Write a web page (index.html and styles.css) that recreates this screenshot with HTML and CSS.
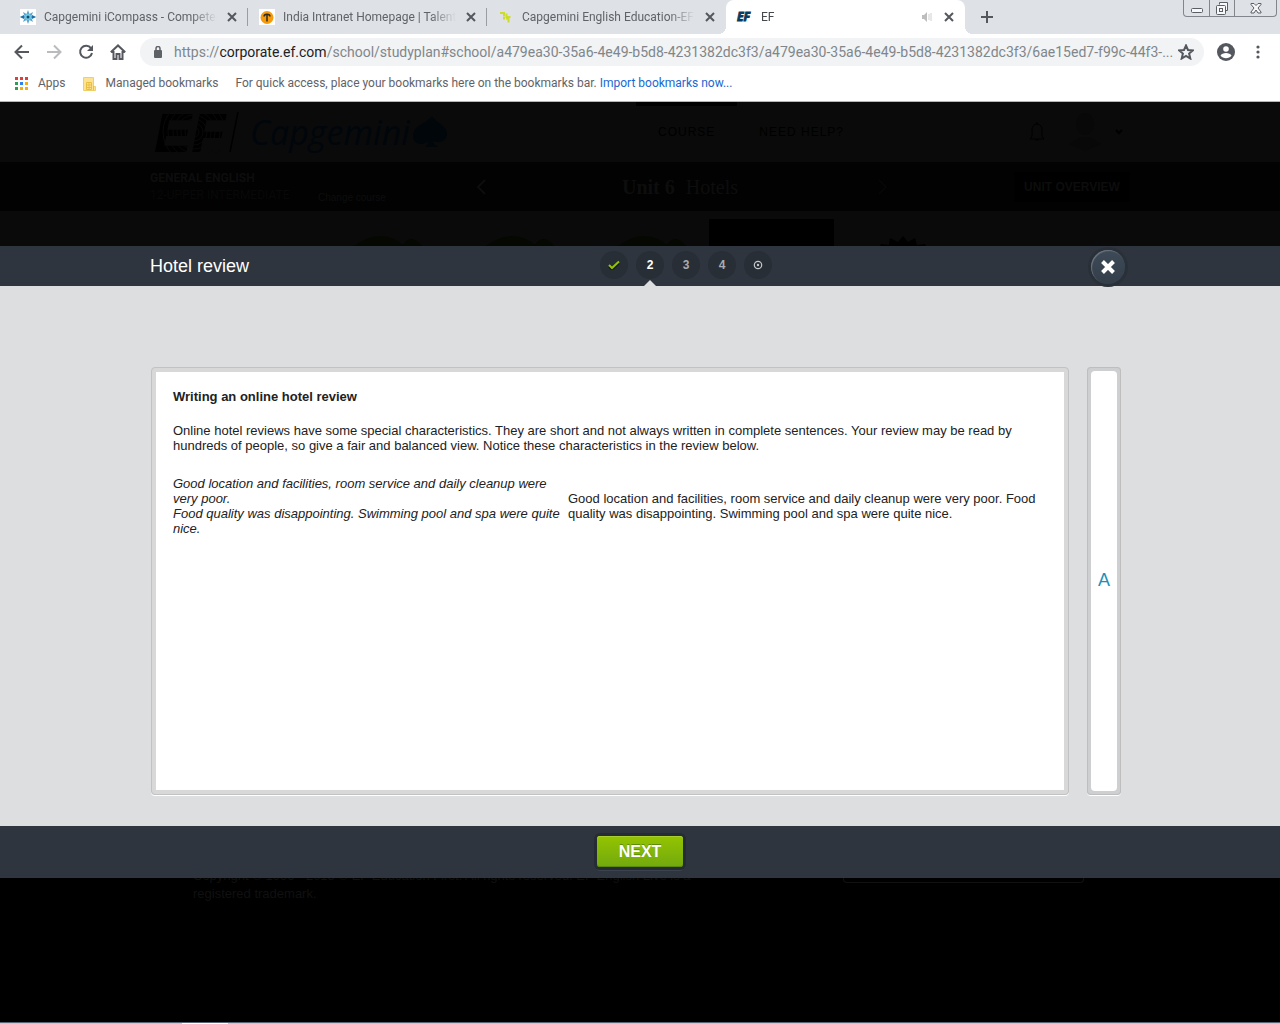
FILE: index.html
```html
<!DOCTYPE html>
<html lang="en">
<head>
<meta charset="utf-8">
<title>EF</title>
<link rel="stylesheet" href="styles.css">
</head>
<body>
<header class="browser">
  <div class="tab-strip">
    <div class="tab">
      <svg class="favicon" viewBox="0 0 16 16"><rect width="16" height="16" fill="#fff"/><path d="M8 1l1.500 4 3.500-2-1.500 4 4.500 1-4.500 1 1.500 4-3.500-2L8 15l-1.500-4L3 13l1.500-4L0 8l4.500-1L3 3l3.500 2z" fill="#5aa5cf"/><path d="M0 8l4-2v4zM12 6l4 2-4 2z" fill="#1c6ea4"/><circle cx="8" cy="8" r="3" fill="#6fcbe3"/><circle cx="8" cy="8" r="1.500" fill="#164a73"/></svg>
      <span class="tab-title">Capgemini iCompass - Competen</span>
      <button class="tab-close" aria-label="Close tab"><svg viewBox="0 0 10 10"><path d="M1 1l8 8M9 1l-8 8"/></svg></button>
    </div>
    <div class="tab divided">
      <svg class="favicon" viewBox="0 0 16 16"><rect width="16" height="16" fill="#fff"/><circle cx="8" cy="8.500" r="6.500" fill="#f79a0a"/><path d="M5 7.500c0-3 6-3 6 0M8 5.500v7" fill="none" stroke="#2b2b2b" stroke-width="1.500"/></svg>
      <span class="tab-title">India Intranet Homepage | Talent</span>
      <button class="tab-close" aria-label="Close tab"><svg viewBox="0 0 10 10"><path d="M1 1l8 8M9 1l-8 8"/></svg></button>
    </div>
    <div class="tab divided">
      <svg class="favicon" viewBox="0 0 16 16"><path d="M2 4h4v3.500M8.500 4.500v3.500h4M6 8v2.500M8 9.500h2.500v4" fill="none" stroke="#cddb2a" stroke-width="2"/></svg>
      <span class="tab-title">Capgemini English Education-EF S</span>
      <button class="tab-close" aria-label="Close tab"><svg viewBox="0 0 10 10"><path d="M1 1l8 8M9 1l-8 8"/></svg></button>
    </div>
    <div class="tab active">
      <span class="favicon ef-mark">EF</span>
      <span class="tab-title">EF</span>
      <svg class="speaker" viewBox="0 0 10 10"><path d="M0 3h2l3-3v10l-3-3h-2z" fill="#bdbdbd"/><path d="M7 2v6M9 1v8" stroke="#d0d0d0"/></svg>
      <button class="tab-close" aria-label="Close tab"><svg viewBox="0 0 10 10"><path d="M1 1l8 8M9 1l-8 8"/></svg></button>
    </div>
    <button class="new-tab" aria-label="New tab"><svg viewBox="0 0 12 12"><path d="M6 0v12M0 6h12"/></svg></button>
    <div class="window-controls">
      <button class="win" aria-label="Minimize"><svg viewBox="0 0 16 16"><rect x="2.500" y="8.500" width="11" height="4" rx="1"/></svg></button>
      <button class="win" aria-label="Restore"><svg viewBox="0 0 16 16"><path d="M5.500 4.500v-2h8v8h-2"/><rect x="2.500" y="5.500" width="9" height="9" rx="1"/><rect x="5.500" y="8.500" width="3" height="3"/></svg></button>
      <button class="win win-close" aria-label="Close window"><svg viewBox="0 0 16 16"><path d="M3 3.500h3l2 2 2-2h3v1L10 8l3 4v1h-3l-2-3-2 3h-3v-1l3-4-3-3.500z"/></svg></button>
    </div>
  </div>

  <div class="toolbar">
    <button class="tool" aria-label="Back"><svg viewBox="0 0 16 16"><path d="M15 8H2M8 1.500L1.500 8 8 14.500"/></svg></button>
    <button class="tool muted" aria-label="Forward"><svg viewBox="0 0 16 16"><path d="M1 8h13M8 1.500L14.500 8 8 14.500"/></svg></button>
    <button class="tool" aria-label="Reload"><svg viewBox="0 0 16 16"><path d="M13 4.200A6 6 0 1 0 14 9"/><path class="solid" d="M15 1v6H9z"/></svg></button>
    <button class="tool" aria-label="Home"><svg viewBox="0 0 16 16"><path d="M.800 8.300L8 1.500l7.200 6.800M3.500 7v8h3v-5h3v5h3V7"/></svg></button>
    <div class="omnibox">
      <svg class="lock" viewBox="0 0 10 12"><rect x="1" y="4" width="8" height="8" rx="1" fill="#5f6368"/><path d="M3 4V2.500a2 2 0 0 1 4 0V4" fill="none" stroke="#5f6368" stroke-width="1.500"/></svg>
      <div class="url" role="textbox" aria-label="Address" contenteditable="true" spellcheck="false">https://<span class="domain">corporate.ef.com</span>/school/studyplan#school/a479ea30-35a6-4e49-b5d8-4231382dc3f3/a479ea30-35a6-4e49-b5d8-4231382dc3f3/6ae15ed7-f99c-44f3-...</div>
      <button class="star" aria-label="Bookmark this page"><svg viewBox="0 0 16 16"><path d="M8 1.500l2 4.500 4.800.400-3.700 3.200 1.200 4.900L8 11.900l-4.300 2.600 1.200-4.900L1.200 6.400 6 6z"/></svg></button>
    </div>
    <button class="profile" aria-label="Profile"><svg viewBox="0 0 18 18"><circle cx="9" cy="9" r="9" fill="#54585e"/><circle cx="9" cy="6" r="2.800" fill="#fff"/><path d="M3.500 12.500c1.500-3.500 9.500-3.500 11 0-2.500 3.500-8.500 3.500-11 0z" fill="#fff"/></svg></button>
    <button class="menu" aria-label="Menu"><svg viewBox="0 0 4 14"><circle cx="2" cy="2" r="1.600"/><circle cx="2" cy="7" r="1.600"/><circle cx="2" cy="12" r="1.600"/></svg></button>
  </div>

  <nav class="bookmarks">
    <a class="bookmark" href="#apps"><svg class="apps" viewBox="0 0 13 13"><path d="M0 0h3v3H0zM5 0h3v3H5zM10 0h3v3h-3z" fill="#e0403a"/><path d="M0 5h3v3H0zM0 10h3v3H0z" fill="#2f9e52"/><path d="M5 5h3v3H5z" fill="#2a84f0"/><path d="M10 5h3v3h-3zM5 10h3v3H5zM10 10h3v3h-3z" fill="#f4ae10"/></svg>Apps</a>
    <a class="bookmark" href="#managed"><svg class="folder" viewBox="0 0 13 14"><path d="M.500.500h10v9h2v4H.500z" fill="#fde293" stroke="#f0cf68"/><path d="M3.500 5.500h5v7h-5zM3.500 8h5M3.500 10.500h5M6 5.500v7M10.500 9v4" fill="none" stroke="#eabf3f"/></svg>Managed bookmarks</a>
    <span class="hint">For quick access, place your bookmarks here on the bookmarks bar. <a href="#import">Import bookmarks now...</a></span>
  </nav>
</header>

<div class="site-header">
  <div class="wrap site-row">
    <svg class="ef-logo" viewBox="0 0 90 44" role="img" aria-label="EF">
      <text x="0" y="42" class="ef-letters">EF</text>
      <g class="rings"><circle cx="40" cy="22" r="5"/><circle cx="40" cy="22" r="9"/><circle cx="40" cy="22" r="13"/><circle cx="40" cy="22" r="17"/><circle cx="40" cy="22" r="21"/><circle cx="40" cy="22" r="26"/><circle cx="40" cy="22" r="31"/></g>
      <path d="M84 2l-8 40" stroke="#000" stroke-width="1.500"/>
    </svg>
    <div class="cap-logo"><span>Capgemini</span><svg viewBox="0 0 34 32"><path d="M19 0C13 8 0 9 0 20c0 9 11 10 15 5 0 3-1 5-3 6h14c-3-1-6-3-6-6 6 3 14 0 14-7C34 9 24 8 19 0z" fill="#00060a"/></svg></div>
    <nav class="site-nav"><a class="current" href="#course">COURSE</a><a href="#help">NEED HELP?</a></nav>
    <svg class="bell" viewBox="0 0 16 20"><path d="M8 0v2M1 17h14c-3-3-2-6-2-9 0-8-10-8-10 0 0 3 1 6-2 9zM6 18h4" fill="none" stroke="#000"/></svg>
    <svg class="person" viewBox="0 0 32 40"><ellipse cx="16" cy="12" rx="9" ry="11"/><path d="M0 32l12-7h8l12 7-16 7z"/></svg>
    <svg class="chevron" viewBox="0 0 8 6"><path d="M1 1l3 3 3-3" fill="none" stroke="#000" stroke-width="2"/></svg>
  </div>
</div>

<div class="course-bar">
  <div class="wrap course-row">
    <div class="course"><strong>GENERAL ENGLISH</strong><div class="level">12-UPPER INTERMEDIATE</div></div>
    <a class="change" href="#change">Change course</a>
    <svg class="arrow" viewBox="0 0 10 16"><path d="M9 1L2 8l7 7"/></svg>
    <h1 class="unit"><strong>Unit 6</strong> Hotels</h1>
    <svg class="arrow faint" viewBox="0 0 10 16"><path d="M1 1l7 7-7 7"/></svg>
    <button class="overview">UNIT OVERVIEW</button>
  </div>
</div>

<div class="lessons">
  <div class="wrap lesson-row">
    <svg class="lesson" viewBox="0 0 80 10"><path d="M0 10Q28-10 50 10z"/><path d="M48 10q9-14 20 0z"/></svg>
    <svg class="lesson" viewBox="0 0 80 10"><path d="M0 10Q28-10 50 10z"/><path d="M48 10q9-14 20 0z"/></svg>
    <svg class="lesson" viewBox="0 0 80 10"><path d="M0 10Q28-10 50 10z"/><path d="M48 10q9-14 20 0z"/></svg>
    <div class="lesson-current"></div>
    <svg class="badge" viewBox="0 0 46 10"><path d="M0 10l1-2 8 1 1-7 8 4 5-6 5 6 7-4 2 7 8-1 1 2z"/></svg>
  </div>
</div>

<main class="activity">
  <header class="activity-head">
    <div class="wrap head-row">
      <h2 class="activity-title">Hotel review</h2>
      <div class="steps">
        <button class="step" aria-label="Step 1, done"><svg viewBox="0 0 12 10"><path d="M1 6.500l3 3L11 3" stroke="#111" /><path d="M1 5l3 3 7-6.500" stroke="#93c400"/></svg></button>
        <button class="step now" aria-current="step">2</button>
        <button class="step">3</button>
        <button class="step">4</button>
        <button class="step" aria-label="Finish"><svg viewBox="0 0 10 10"><circle cx="5" cy="5" r="3.700" stroke="#c3c6ca" stroke-width="1.200"/><circle cx="5" cy="5" r="1.200" fill="#c3c6ca"/></svg></button>
      </div>
      <button class="close" aria-label="Close activity"><svg viewBox="0 0 16 16"><path d="M2.500 2.500l11 11M13.500 2.500l-11 11"/></svg></button>
    </div>
  </header>

  <div class="activity-body">
    <div class="wrap panels">
      <article class="panel">
        <h3>Writing an online hotel review</h3>
        <p>Online hotel reviews have some special characteristics. They are short and not always written in complete sentences. Your review may be read by hundreds of people, so give a fair and balanced view. Notice these characteristics in the review below.</p>
        <div class="compare">
          <div><em>Good location and facilities, room service and daily cleanup were very poor.<br>Food quality was disappointing. Swimming pool and spa were quite nice.</em></div>
          <div>Good location and facilities, room service and daily cleanup were very poor. Food quality was disappointing. Swimming pool and spa were quite nice.</div>
        </div>
      </article>
      <button class="side"><span>A</span></button>
    </div>
  </div>

  <footer class="activity-foot"><button class="next">NEXT</button></footer>
</main>

<footer class="site-footer">
  <div class="wrap footer-row">
    <p>Copyright © 1996 - 2018 © EF Education First. All rights reserved. EF English Live is a registered trademark.</p>
    <div class="language"></div>
  </div>
</footer>
<div class="taskbar"><div class="task"></div></div>
</body>
</html>
```
FILE: styles.css
```css
* { box-sizing: border-box; }
body {
  margin: 0;
  min-height: 100vh;
  display: flex;
  flex-direction: column;
  background: #000;
  font-family: "Liberation Sans", Arial, sans-serif;
  font-size: 13px;
  line-height: 15px;
}
button { border: 0; padding: 0; background: none; font: inherit; color: inherit; }
h1, h2, h3, p { margin: 0; font: inherit; }
a { color: inherit; text-decoration: none; }
svg { display: block; flex: none; }
.wrap { width: 100%; max-width: 980px; margin: 0 auto; }

/* Browser window */
.browser {
  background: #fff;
  border-bottom: 1px solid #b6b6b6;
  font-family: Roboto, "Open Sans", sans-serif;
  font-size: 12px;
  color: #5f6368;
}
.tab-strip { display: flex; height: 34px; padding-left: 9px; background: #dee1e6; }
.tab {
  flex: 0 1 239px;
  min-width: 0;
  display: flex;
  align-items: center;
  padding: 0 11px;
  position: relative;
}
.tab.divided::before {
  content: "";
  position: absolute;
  left: -1px;
  top: 8px;
  height: 18px;
  border-left: 1px solid #9a9da2;
}
.tab.active { background: #fff; border-radius: 8px 8px 0 0; color: #45494d; }
.tab.active::before, .tab.active::after {
  content: "";
  position: absolute;
  bottom: 0;
  width: 8px;
  height: 8px;
}
.tab.active::before { left: -8px; background: radial-gradient(circle at 0 0, #dee1e6 8px, #fff 8px); }
.tab.active::after { right: -8px; background: radial-gradient(circle at 100% 0, #dee1e6 8px, #fff 8px); }
.favicon { width: 16px; height: 16px; flex: none; margin-right: 8px; }
.ef-mark { font: italic bold 12px/16px "Open Sans", sans-serif; color: #0b3b5c; -webkit-text-stroke: 1px #0b3b5c; }
.tab-title {
  flex: 1;
  min-width: 0;
  overflow: hidden;
  white-space: nowrap;
  margin-right: 10px;
  -webkit-mask-image: linear-gradient(to right, #000 85%, transparent);
  mask-image: linear-gradient(to right, #000 85%, transparent);
}
.tab-close svg { width: 10px; height: 10px; fill: none; stroke: #54585e; stroke-width: 2; }
.speaker { width: 10px; height: 10px; margin-right: 12px; }
.new-tab { margin-left: 16px; }
.new-tab svg { width: 12px; height: 12px; stroke: #54585e; stroke-width: 2; }
.window-controls {
  display: flex;
  height: 17px;
  margin-left: auto;
  margin-right: 3px;
  border: 1px solid #82868c;
  border-top: 0;
  border-radius: 0 0 4px 4px;
}
.win { width: 25px; display: flex; justify-content: center; align-items: center; }
.win + .win { border-left: 1px solid #82868c; }
.win-close { width: 42px; }
.win svg { width: 16px; height: 16px; fill: #f7f8fa; stroke: #5b5e63; }

.toolbar { display: flex; align-items: center; height: 36px; padding: 0 20px 0 14px; }
.tool { width: 16px; margin-right: 16px; }
.tool svg { width: 16px; height: 16px; fill: none; stroke: #54585e; stroke-width: 2; }
.tool .solid { fill: #54585e; stroke: none; }
.tool.muted svg { stroke: #b9bbbe; }
.omnibox {
  flex: 1;
  min-width: 0;
  display: flex;
  align-items: center;
  height: 28px;
  padding: 0 10px 0 13px;
  margin-right: 13px;
  border-radius: 14px;
  background: #f1f3f4;
}
.tool + .omnibox { margin-left: -2px; }
.lock { width: 10px; height: 12px; }
.url {
  flex: 1;
  min-width: 0;
  margin-left: 11px;
  overflow: hidden;
  white-space: nowrap;
  font-size: 14px;
  line-height: 20px;
  color: #80868b;
}
.domain { color: #202124; }
.star svg { width: 16px; height: 16px; fill: none; stroke: #54585e; stroke-width: 2; }
.profile { margin-right: 21px; }
.profile svg { width: 18px; height: 18px; }
.menu svg { width: 4px; height: 14px; fill: #54585e; }

.bookmarks { display: flex; align-items: center; height: 31px; padding: 0 15px 4px; white-space: nowrap; }
.bookmark { display: flex; align-items: center; gap: 10px; margin-right: 17px; }
.apps { width: 13px; height: 13px; }
.folder { width: 13px; height: 14px; }
.hint a { color: #1967d2; }

/* Dimmed study page */
.site-header, .lessons { background: #0a0a0a; }
.site-row { display: flex; height: 60px; align-items: center; }
.ef-logo { width: 90px; height: 44px; margin-left: 4px; }
.ef-letters { font: italic bold 56px "Liberation Sans", sans-serif; }
.rings { fill: none; stroke: #0a0a0a; stroke-width: 1; }
.cap-logo {
  display: flex;
  align-items: center;
  width: 204px;
  margin-left: 6px;
  color: #00060b;
  font: italic 34px/44px "Open Sans", sans-serif;
}
.cap-logo span { width: 163px; }
.cap-logo svg { width: 34px; height: 32px; }
.site-nav { display: flex; align-self: stretch; margin-left: 182px; font-size: 12px; line-height: 60px; letter-spacing: 1px; color: #000; }
.site-nav a { padding: 0 22px; }
.site-nav .current { box-shadow: inset 0 4px #000; }
.bell { width: 16px; height: 20px; margin-left: auto; }
.person { width: 32px; height: 40px; margin: 0 14px 0 24px; fill: #080808; }
.chevron { width: 8px; height: 6px; margin-right: 7px; }

.course-bar { background: #020202; color: #0d0d0d; }
.course-row { display: flex; height: 49px; align-items: center; }
.course { width: 168px; font: 12px/17px Roboto, sans-serif; }
.level { color: #080808; }
.change { width: 158px; font-size: 10px; padding-top: 22px; }
.arrow { width: 10px; height: 16px; fill: none; stroke: #0d0d0d; stroke-width: 2; }
.arrow.faint { stroke: #060606; }
.unit { width: 256px; margin-left: 136px; font: 20px/24px "Liberation Serif", serif; }
.unit strong { margin-right: 6px; }
.overview { width: 116px; height: 30px; margin-left: auto; background: #000; font: bold 12px/30px "Liberation Sans", sans-serif; }

.lesson-row { display: flex; height: 35px; align-items: flex-end; padding-left: 204px; gap: 52px; overflow: hidden; }
.lesson { width: 80px; height: 10px; fill: #040800; }
.lesson-current { width: 125px; height: 27px; margin-left: -41px; background: #000; }
.badge { width: 46px; height: 10px; fill: #000; margin-left: -6px; }

/* Activity dialog */
.activity-head, .activity-foot { background: #2f353f; color: #fff; }
.head-row { display: flex; height: 40px; align-items: center; padding-right: 5px; }
.activity-title { width: 450px; font-size: 18px; line-height: 22px; }
.steps { display: flex; gap: 8px; padding-bottom: 2px; }
.step {
  position: relative;
  width: 28px;
  height: 28px;
  display: flex;
  align-items: center;
  justify-content: center;
  border-radius: 50%;
  background: #282e35;
  color: #a9acb0;
  font-weight: bold;
  font-size: 12px;
}
.step svg { width: 12px; height: 10px; fill: none; stroke-width: 2; }
.step.now { color: #fff; }
.step.now::after {
  content: "";
  position: absolute;
  left: 8px;
  top: 29px;
  border: 6px solid transparent;
  border-top: 0;
  border-bottom-color: #dddee0;
}
.close {
  width: 34px;
  height: 34px;
  margin: 2px 0 0 auto;
  display: flex;
  align-items: center;
  justify-content: center;
  border-radius: 50%;
  background: linear-gradient(#3f4a58, #333e4a);
  box-shadow: inset 1px 1px 1px #6d7681, 0 0 0 3px #2a3038;
}
.close svg { width: 16px; height: 16px; fill: none; stroke: #fff; stroke-width: 4; }

.activity-body { background: #dddee0; padding: 81px 0 31px; }
.panels { display: flex; gap: 18px; padding: 0 9px 0 1px; }
.panel {
  flex: 1;
  min-width: 0;
  min-height: 428px;
  padding: 17px;
  border: 5px solid #d8d8d8;
  border-radius: 4px;
  background: #fff;
  background-clip: padding-box;
  outline: 1px solid #c2c2c2;
  outline-offset: -1px;
  box-shadow: 0 1px #fff;
  color: #222;
}
.panel h3 { font-weight: bold; margin-bottom: 19px; }
.compare { display: grid; grid-template-columns: 387px 1fr; gap: 8px; align-items: center; margin-top: 23px; }
.side {
  width: 34px;
  display: flex;
  padding: 4px;
  border-radius: 4px;
  background: #cecfd0;
  box-shadow: inset 0 0 0 1px #bebebe, 0 1px #fff;
  color: #1f8fb5;
  font-size: 18px;
}
.side span {
  flex: 1;
  align-self: stretch;
  display: flex;
  align-items: center;
  justify-content: center;
  border-radius: 4px;
  padding-bottom: 2px;
  background: #fff;
}
.activity-foot { display: flex; justify-content: center; padding: 10px 0 11px; }
.next {
  width: 86px;
  height: 31px;
  border-radius: 3px;
  background: linear-gradient(#94c400, #72a90f);
  box-shadow: inset 0 1px #a8d02c, inset 0 -1px #5c8a0c, 0 0 0 3px #262c33, 0 4px #3c434d;
  color: #fff;
  font-weight: bold;
  font-size: 16px;
  text-shadow: 0 -1px #5c8a0c;
}

/* Page end and desktop edge */
.site-footer { flex: 1; overflow: hidden; color: #101010; }
.footer-row { display: flex; justify-content: space-between; padding: 0 46px 0 43px; }
.footer-row p { width: 510px; margin-top: -11px; line-height: 18px; }
.language { width: 241px; height: 5px; border: 1px solid #111; border-top: 0; border-radius: 0 0 4px 4px; }
.taskbar { height: 2px; padding: 0 0 0 182px; background: #b9cddc; border-top: 1px solid #566675; }
.task { width: 46px; height: 1px; background: #fff; }
```
